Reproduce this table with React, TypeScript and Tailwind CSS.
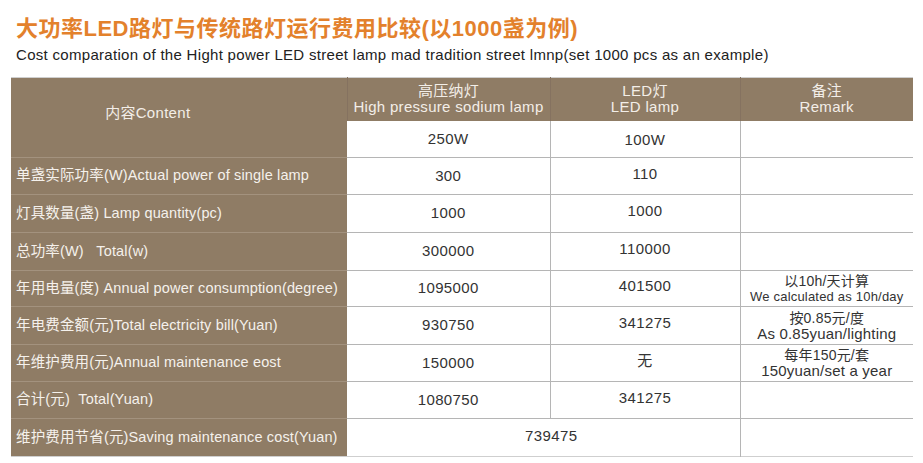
import React from "react";

type Row = {
  label: string;
  hps: string;
  led: string;
  remark?: [string, string];
  h: string;
};

const rows: Row[] = [
  { label: "单盏实际功率(W)Actual power of single lamp", hps: "300", led: "110", h: "h-[37px]" },
  { label: "灯具数量(盏) Lamp quantity(pc)", hps: "1000", led: "1000", h: "h-[38px]" },
  { label: "总功率(W)   Total(w)", hps: "300000", led: "110000", h: "h-[38px]" },
  {
    label: "年用电量(度) Annual power consumption(degree)",
    hps: "1095000",
    led: "401500",
    remark: ["以10h/天计算", "We calculated as 10h/day"],
    h: "h-[36px]",
  },
  {
    label: "年电费金额(元)Total electricity bill(Yuan)",
    hps: "930750",
    led: "341275",
    remark: ["按0.85元/度", "As 0.85yuan/lighting"],
    h: "h-[38px]",
  },
  {
    label: "年维护费用(元)Annual maintenance eost",
    hps: "150000",
    led: "无",
    remark: ["每年150元/套", "150yuan/set a year"],
    h: "h-[37px]",
  },
  { label: "合计(元)  Total(Yuan)", hps: "1080750", led: "341275", h: "h-[37px]" },
  { label: "维护费用节省(元)Saving maintenance cost(Yuan)", hps: "", led: "", h: "h-[38px]" },
];

const font = { fontFamily: '"Liberation Sans", Arial, "Noto Sans CJK SC", sans-serif' };

export default function App() {
  return (
    <div className="w-[923px] h-[463px] bg-white overflow-hidden" style={font}>
      <h1 className="pl-[16px] pt-[16px] text-[22px] leading-[26px] font-bold tracking-[0.5px] text-[#e3812c]">
        大功率LED路灯与传统路灯运行费用比较(以1000盏为例)
      </h1>
      <p className="pl-[16px] mt-[4px] text-[15px] leading-[18px] tracking-[0.3px] text-[#222]">
        Cost comparation of the Hight power LED street lamp mad tradition street lmnp(set 1000 pcs as an example)
      </p>

      <table className="ml-[11px] mt-[13px] w-[902px] table-fixed border-collapse border-t border-b border-[#cfcfcf] text-[15px] tracking-[0.4px]">
        <colgroup>
          <col className="w-[336px]" />
          <col className="w-[203px]" />
          <col className="w-[190px]" />
          <col className="w-[173px]" />
        </colgroup>
        <thead>
          <tr className="h-[43px] bg-[#8f7c65] text-[#f3eee8] leading-[16px]">
            <th rowSpan={2} className="font-normal text-center pr-[62px] pb-[10px] border-b border-[#a3927e] tracking-[0.3px]">
              内容Content
            </th>
            <th className="font-normal text-center tracking-[0.3px] border-l border-[#857260]">
              高压纳灯
              <br />
              High pressure sodium lamp
            </th>
            <th className="font-normal text-center tracking-[0.3px] border-l border-[#857260]">
              LED灯
              <br />
              LED lamp
            </th>
            <th className="font-normal text-center tracking-[0.3px] border-l border-[#857260]">
              备注
              <br />
              Remark
            </th>
          </tr>
          <tr className="h-[37px] text-[#333]">
            <td className="text-center border-b border-[#b5b5b5]">250W</td>
            <td className="text-center border-b border-l border-[#b5b5b5] align-top pt-[8px]">100W</td>
            <td className="border-b border-l border-[#b5b5b5]"></td>
          </tr>
        </thead>
        <tbody>
          {rows.map((r, i) => {
            const last = i === rows.length - 1;
            return (
              <tr key={r.label} className={r.h}>
                <td
                  className={
                    "bg-[#8f7c65] text-[#f5f1ec] pl-[5px] whitespace-pre overflow-hidden text-[14.5px] tracking-[0.15px] " +
                    (last ? "" : "border-b border-[#a3927e]")
                  }
                >
                  {r.label}
                </td>
                {last ? (
                  <td colSpan={2} className="text-center text-[#333] pl-[16px] pb-[3px]">
                    739475
                  </td>
                ) : (
                  <>
                    <td className="text-center text-[#333] border-b border-[#b5b5b5]">{r.hps}</td>
                    <td className="text-center text-[#333] border-b border-l border-[#b5b5b5] pb-[4px]">{r.led}</td>
                  </>
                )}
                <td
                  className={
                    "text-center text-[#333] border-l border-[#b5b5b5] leading-[16px] tracking-[0.2px] " +
                    (last ? "" : "border-b")
                  }
                >
                  {r.remark && (
                    <>
                      <div className="text-[14px]">{r.remark[0]}</div>
                      <div className={r.remark[1].startsWith("We") ? "text-[13px]" : "text-[15px]"}>
                        {r.remark[1]}
                      </div>
                    </>
                  )}
                </td>
              </tr>
            );
          })}
        </tbody>
      </table>
    </div>
  );
}
